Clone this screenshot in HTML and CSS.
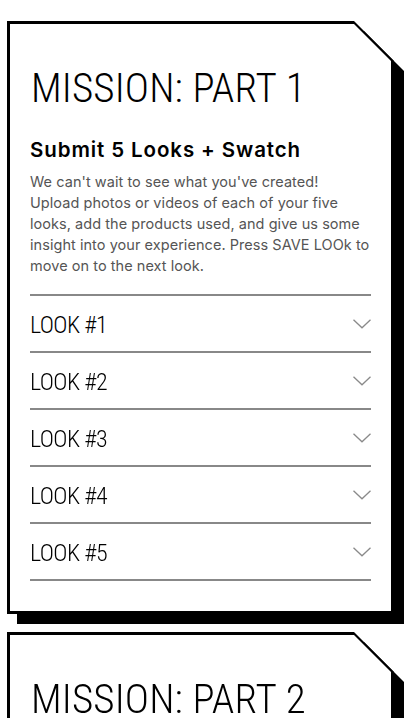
FILE: index.html
```html
<!DOCTYPE html>
<html lang="en">
<head>
<meta charset="utf-8">
<title>Missions</title>
<link rel="stylesheet" href="styles.css">
</head>
<body>
<main class="page">
  <section class="card-wrap">
    <div class="card">
      <div class="card-inner">
        <h1 class="mission-title">MISSION: PART 1</h1>
        <h2 class="mission-sub">Submit 5 Looks + Swatch</h2>
        <p class="mission-text">We can't wait to see what you've created!<br>Upload photos or videos of each of your five<br>looks, add the products used, and give us some<br>insight into your experience. Press SAVE LOOk to<br>move on to the next look.</p>
        <ul class="looks">
          <li class="look"><span class="look-name">LOOK #1</span><svg class="chev" width="18" height="10" viewBox="0 0 18 10"><polyline points="0.5,0.8 9,8.8 17.5,0.8"/></svg></li>
          <li class="look"><span class="look-name">LOOK #2</span><svg class="chev" width="18" height="10" viewBox="0 0 18 10"><polyline points="0.5,0.8 9,8.8 17.5,0.8"/></svg></li>
          <li class="look"><span class="look-name">LOOK #3</span><svg class="chev" width="18" height="10" viewBox="0 0 18 10"><polyline points="0.5,0.8 9,8.8 17.5,0.8"/></svg></li>
          <li class="look"><span class="look-name">LOOK #4</span><svg class="chev" width="18" height="10" viewBox="0 0 18 10"><polyline points="0.5,0.8 9,8.8 17.5,0.8"/></svg></li>
          <li class="look"><span class="look-name">LOOK #5</span><svg class="chev" width="18" height="10" viewBox="0 0 18 10"><polyline points="0.5,0.8 9,8.8 17.5,0.8"/></svg></li>
        </ul>
      </div>
    </div>
  </section>
  <section class="card-wrap">
    <div class="card">
      <div class="card-inner card-inner--tall">
        <h1 class="mission-title">MISSION: PART 2</h1>
      </div>
    </div>
  </section>
</main>
</body>
</html>
```
FILE: styles.css
```css
html, body {
  margin: 0;
  padding: 0;
  background: #fff;
}

.page {
  padding: 21px 14px 0 7px;
  display: flex;
  flex-direction: column;
  gap: 18px;
}

.card-wrap {
  width: 387px;
  filter: drop-shadow(10px 10px 0 #000);
}

.card {
  background: #000;
  padding: 3px;
  clip-path: polygon(0 0, calc(100% - 40px) 0, 100% 40px, 100% 100%, 0 100%);
}

.card-inner {
  background: #fff;
  clip-path: polygon(0 0, calc(100% - 37px) 0, 100% 37px, 100% 100%, 0 100%);
  padding: 40px 20px 30px 20px;
}

.card-inner--tall {
  min-height: 200px;
}

.mission-title {
  margin: 0 0 0 1px;
  font-family: "Roboto Condensed", "Roboto", sans-serif;
  font-weight: 300;
  font-size: 41px;
  line-height: 48px;
  letter-spacing: 0.15px;
  color: #000;
  white-space: nowrap;
}

.mission-sub {
  margin: 26px 0 0 0;
  font-family: "Inter", sans-serif;
  font-weight: 600;
  font-size: 20.5px;
  line-height: 24px;
  letter-spacing: 0.9px;
  color: #000;
  white-space: nowrap;
}

.mission-text {
  margin: 9px 0 0 0;
  font-family: "Inter", sans-serif;
  font-size: 14.5px;
  line-height: 21px;
  letter-spacing: 0.05px;
  color: #555;
  white-space: nowrap;
}

.looks {
  list-style: none;
  margin: 18px 0 0 0;
  padding: 0;
  border-bottom: 2px solid #888;
}

.look {
  display: flex;
  align-items: center;
  justify-content: space-between;
  height: 55px;
  border-top: 2px solid #888;
}

.look-name {
  margin-top: 3px;
  font-family: "Roboto Condensed", "Roboto", sans-serif;
  font-weight: 300;
  font-size: 24px;
  line-height: 28px;
  letter-spacing: -0.6px;
  color: #000;
}

.chev {
  display: block;
  fill: none;
  stroke: #8a8a8a;
  stroke-width: 1.3;
}
```
